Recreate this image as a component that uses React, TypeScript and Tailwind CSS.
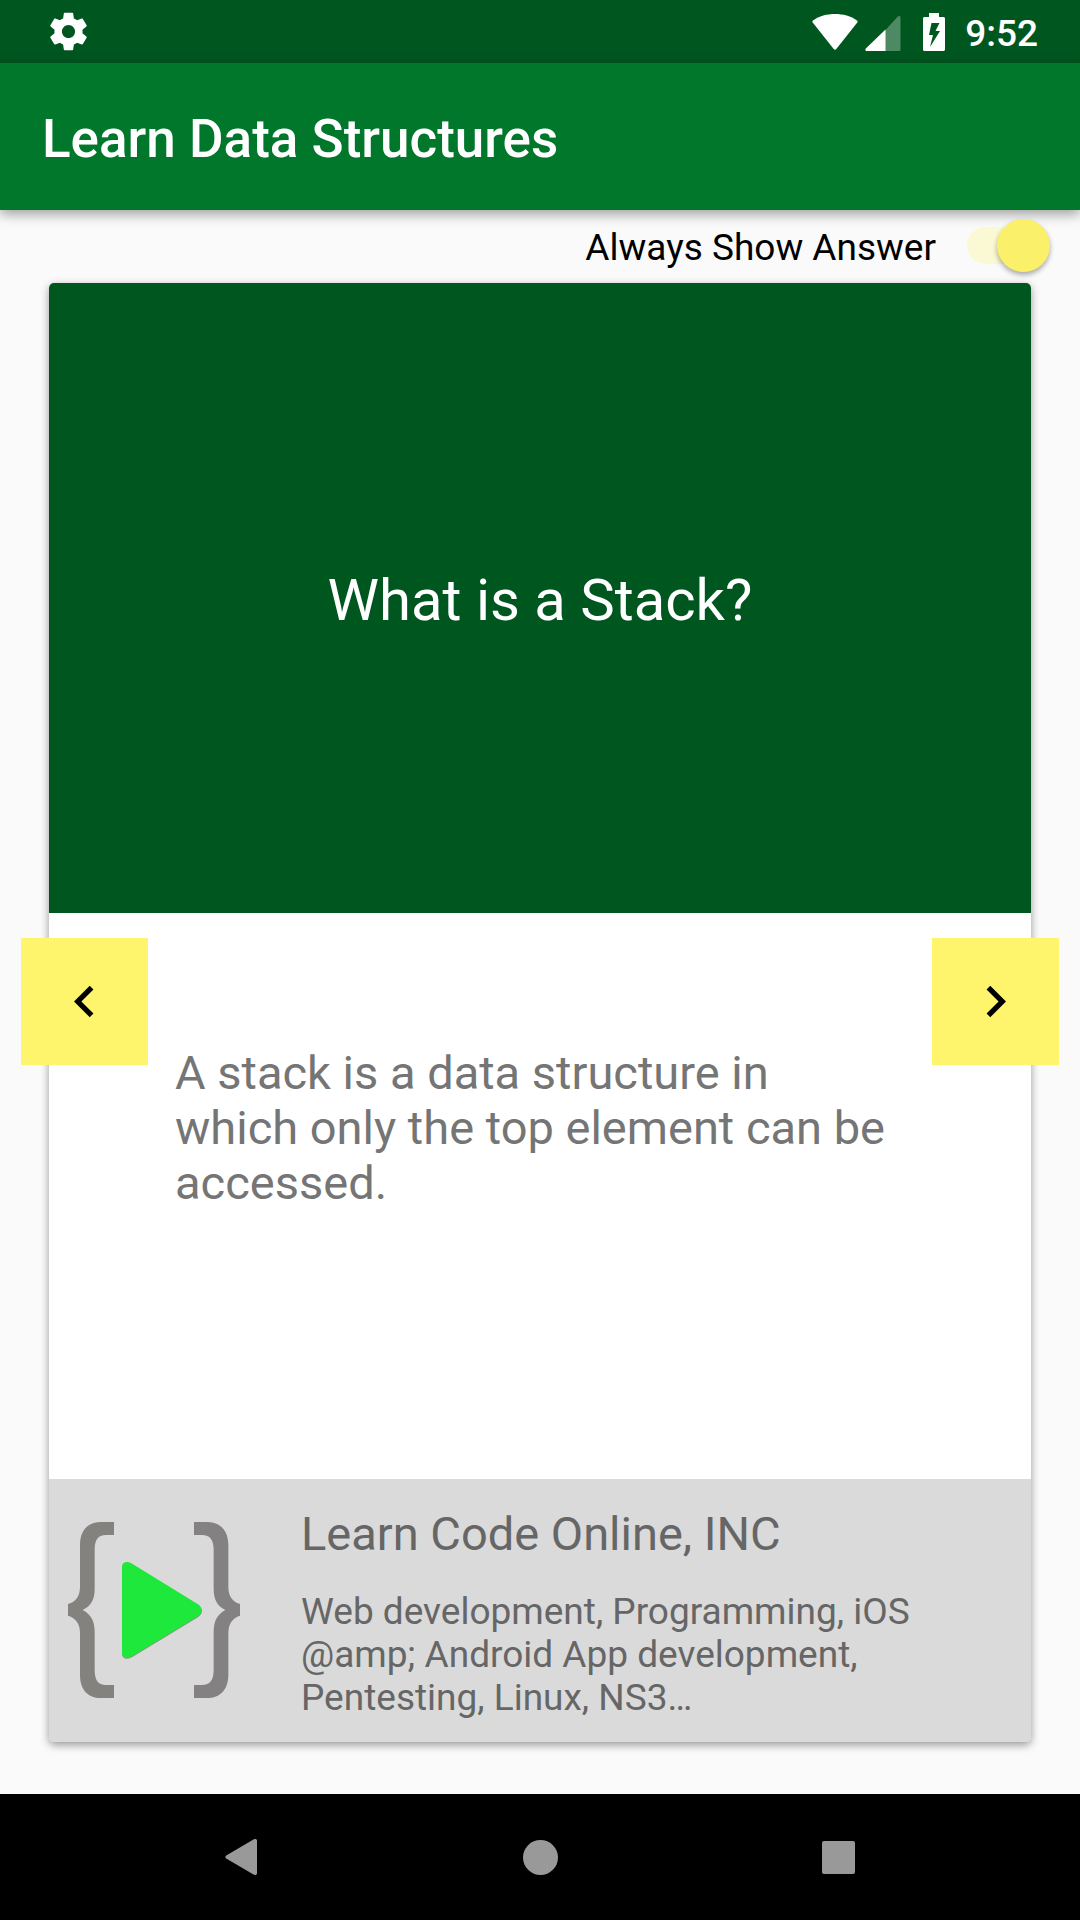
import { useState } from "react";

const cards = [
  {
    question: "What is a Stack?",
    answer:
      "A stack is a data structure in which only the top element can be accessed.",
  },
];

function StatusBar() {
  return (
    <div className="flex h-[63px] items-center justify-between bg-[#00561f] pr-[42px] pl-[46px] text-white">
      <svg width="45" height="45" viewBox="0 0 24 24" fill="currentColor" aria-label="Settings">
        <path d="M19.43 12.98c.04-.32.07-.64.07-.98s-.03-.66-.07-.98l2.11-1.65c.19-.15.24-.42.12-.64l-2-3.46c-.12-.22-.39-.3-.61-.22l-2.49 1c-.52-.4-1.08-.73-1.69-.98l-.38-2.65C14.46 2.18 14.25 2 14 2h-4c-.25 0-.46.18-.49.42l-.38 2.65c-.61.25-1.17.59-1.69.98l-2.49-1c-.23-.09-.49 0-.61.22l-2 3.46c-.13.22-.07.49.12.64l2.11 1.65c-.04.32-.07.65-.07.98s.03.66.07.98l-2.11 1.65c-.19.15-.24.42-.12.64l2 3.46c.12.22.39.3.61.22l2.49-1c.52.4 1.08.73 1.69.98l.38 2.65c.03.24.24.42.49.42h4c.25 0 .46-.18.49-.42l.38-2.65c.61-.25 1.17-.59 1.69-.98l2.49 1c.23.09.49 0 .61-.22l2-3.46c.12-.22.07-.49-.12-.64l-2.11-1.65zM12 15.5c-1.93 0-3.5-1.57-3.5-3.5s1.57-3.5 3.5-3.5 3.5 1.57 3.5 3.5-1.57 3.5-3.5 3.5z" />
      </svg>
      <div className="flex items-center">
        <svg width="46" height="38" viewBox="0 0 46 38" fill="currentColor" aria-label="Wi-Fi">
          <path d="M1 7.500C7 3 15 1 23 1s16 2 22 6.500c.7.600.8 1.400.3 2.100L24.300 36c-.8 1-1.800 1-2.600 0L.7 9.600C.2 8.900.3 8.100 1 7.500z" />
        </svg>
        <svg className="ml-[7px]" width="36" height="38" viewBox="0 0 36 38" fill="currentColor" aria-label="Mobile signal">
          <path opacity=".3" d="M20 17.500 32.600 3.700C33.700 2.500 35.500 3 35.500 4.700V36.500c0 1-.6 1.500-1.500 1.500H20z" />
          <path d="M20.500 16.500V38H1.500C.3 38-.1 36.500.8 35.600z" />
        </svg>
        <svg className="ml-[22px]" width="22" height="38" viewBox="0 0 22 38" fill="currentColor" aria-label="Battery charging">
          <path
            fillRule="evenodd"
            d="M6 0h10v4h4.500c.8 0 1.500.7 1.500 1.500v31c0 .8-.7 1.500-1.500 1.500h-19C.7 38 0 37.300 0 36.500v-31C0 4.700.7 4 1.500 4H6zM8.500 10 6 22h4L7 34l10-16h-4.500l4-8z"
          />
        </svg>
        <time className="ml-5 pt-1 text-[37px] leading-[43px] font-medium">9:52</time>
      </div>
    </div>
  );
}

function BrandLogo() {
  return (
    <svg className="shrink-0" width="172" height="176" viewBox="114 186 516 528" aria-label="Learn Code Online">
      <path
        fill="#83827f"
        d="M252 186H214C172 186 150 212 150 256V380C150 408 138 425 114 432V467C138 474 150 492 150 520V644C150 688 172 714 214 714H252V675H228C204 675 194 660 194 630V516C194 484 184 464 158 450C184 437 194 418 194 386V270C194 240 204 225 228 225H252Z"
      />
      <path
        fill="#848182"
        d="M492 186H530C572 186 595 212 595 256V380C595 408 607 425 630 432V467C607 474 595 492 595 520V644C595 688 572 714 530 714H492V675H516C540 675 551 660 551 630V516C551 484 561 464 586 450C561 437 551 418 551 386V270C551 240 540 225 516 225H492Z"
      />
      <path
        fill="#8f8f8f"
        d="M276 324C276 308 291 304 304 312L504 435C520 446 520 460 504 472L306 592C291 600 276 596 276 581Z"
      />
      <path
        fill="#1ee83b"
        d="M276 322C276 306 291 302 304 310L504 433C519 443 519 459 504 469L304 590C291 598 276 594 276 579Z"
      />
    </svg>
  );
}

function SystemNav() {
  return (
    <nav className="grid h-[126px] grid-cols-3 bg-black px-[93px] text-[#999]">
      <button type="button" aria-label="Back" className="flex items-center justify-center">
        <svg width="34" height="38" viewBox="0 0 34 38" fill="currentColor">
          <path d="M1.200 17.600 28.500 1.500C30.200.6 32 1 32 2.800v32.400c0 1.800-1.800 2.200-3.500 1.300L1.200 20.400c-1.200-.8-1.200-2 0-2.800z" />
        </svg>
      </button>
      <button type="button" aria-label="Home" className="flex items-center justify-center">
        <span className="size-[35px] rounded-full bg-[#999]" />
      </button>
      <button type="button" aria-label="Recent apps" className="flex items-center justify-center">
        <span className="size-[33px] rounded-xs bg-[#999]" />
      </button>
    </nav>
  );
}

export default function App() {
  const [showAnswer, setShowAnswer] = useState(true);
  const [index, setIndex] = useState(0);
  const card = cards[index];
  const move = (step: number) =>
    setIndex((index + step + cards.length) % cards.length);

  return (
    <div className="flex min-h-screen flex-col bg-[#fafafa] font-['Roboto',sans-serif]">
      <StatusBar />
      <header className="flex h-[147px] items-center bg-[#00772a] px-[42px] pt-1 shadow-[0_4px_12px_rgba(0,0,0,0.38)]">
        <h1 className="text-[53px] leading-[62px] font-medium text-white">
          Learn Data Structures
        </h1>
      </header>

      <main className="flex flex-1 flex-col px-[49px] pb-[52px]">
        <label className="-mr-[19px] flex h-[73px] items-center justify-end gap-[31px] pb-0.5 text-[37px] leading-[43px] text-black">
          <span className="pt-1">Always Show Answer</span>
          <input
            type="checkbox"
            role="switch"
            checked={showAnswer}
            onChange={(e) => setShowAnswer(e.target.checked)}
            className="relative h-[53px] w-[83px] cursor-pointer appearance-none before:absolute before:inset-x-0 before:top-2 before:h-[37px] before:rounded-full before:bg-black/20 after:absolute after:top-0 after:left-0 after:size-[53px] after:rounded-full after:bg-[#ececec] after:shadow-[0_3px_5px_rgba(0,0,0,0.32)] checked:before:bg-[#fbf8d4] checked:after:left-[30px] checked:after:bg-[#faf06a]"
          />
        </label>

        <article className="flex flex-1 flex-col rounded-[5px] bg-white shadow-[0_3px_8px_rgba(0,0,0,0.4)]">
          <section className="flex min-h-[630px] items-center justify-center rounded-t-[5px] bg-[#00561f] px-8 pt-9 pb-8">
            <h2 className="text-center text-[58px] leading-[68px] text-white">
              {card.question}
            </h2>
          </section>

          <section className="relative flex flex-1 flex-col px-[132px] pt-[132px] pb-8 pl-[126px]">
            {showAnswer && (
              <p className="text-[47px] leading-[55px] text-[#757575]">{card.answer}</p>
            )}
            <button
              type="button"
              aria-label="Previous card"
              onClick={() => move(-1)}
              className="absolute top-[25px] -left-7 flex size-[127px] items-center justify-center bg-[#fff56c] text-black"
            >
              <svg width="63" height="63" viewBox="0 0 24 24" fill="currentColor">
                <path d="M15.410 7.410 14 6l-6 6 6 6 1.410-1.410L10.830 12z" />
              </svg>
            </button>
            <button
              type="button"
              aria-label="Next card"
              onClick={() => move(1)}
              className="absolute top-[25px] -right-7 flex size-[127px] items-center justify-center bg-[#fff56c] text-black"
            >
              <svg width="63" height="63" viewBox="0 0 24 24" fill="currentColor">
                <path d="M10 6 8.590 7.410 13.170 12l-4.580 4.590L10 18l6-6z" />
              </svg>
            </button>
          </section>

          <footer className="flex min-h-[263px] items-center gap-[61px] rounded-b-[5px] bg-[#dadada] pr-[100px] pb-0.5 pl-[19px] text-[#666]">
            <BrandLogo />
            <div className="pt-1.5">
              <h3 className="text-[47px] leading-[55px]">Learn Code Online, INC</h3>
              <p className="mt-[29px] line-clamp-3 text-[37px] leading-[43px]">
                Web development, Programming, iOS @amp; Android App development,
                Pentesting, Linux, NS3…
              </p>
            </div>
          </footer>
        </article>
      </main>
      <SystemNav />
    </div>
  );
}
